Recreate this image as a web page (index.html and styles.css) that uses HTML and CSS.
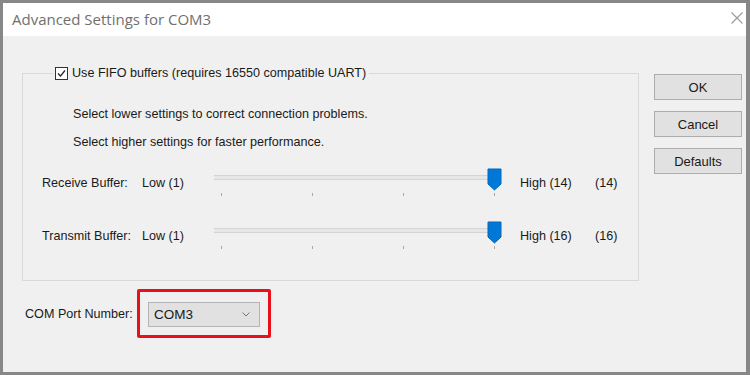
FILE: index.html
```html
<!DOCTYPE html>
<html lang="en">
<head>
  <meta charset="UTF-8" />
  <title>Advanced Settings for COM3</title>
  <link rel="stylesheet" href="styles.css">
</head>
<body>
  <div class="window">
    <div class="titlebar">
      <span class="title">Advanced Settings for COM3</span>
      <svg class="close" width="12" height="12" viewBox="0 0 12 12">
        <path d="M0.5 0.5 L11.5 11.5 M11.5 0.5 L0.5 11.5" stroke="#9a9a9a" stroke-width="1.1" fill="none" />
      </svg>
    </div>

    <div class="content">
      <div class="main">
        <fieldset class="group">
          <legend>
            <span class="checkbox">
              <svg width="11" height="11" viewBox="0 0 11 11">
                <path d="M2 5.5 L4.5 8 L9 2.5" stroke="#222" stroke-width="1.2" fill="none" />
              </svg>
            </span>
            Use FIFO buffers (requires 16550 compatible UART)
          </legend>

          <p class="hint first">Select lower settings to correct connection problems.</p>
          <p class="hint">Select higher settings for faster performance.</p>

          <div class="slider-row">
            <span class="row-label">Receive Buffer:</span>
            <span class="low">Low (1)</span>
            <div class="slider">
              <div class="track"></div>
              <div class="ticks"><i></i><i></i><i></i><i></i></div>
              <svg class="thumb" width="15" height="23" viewBox="0 0 15 23">
                <path d="M1 1 H14 V16 L7.5 22 L1 16 Z" fill="#0078d7" stroke="#0068bd" stroke-width="1" />
              </svg>
            </div>
            <span class="high">High (14)</span>
            <span class="value">(14)</span>
          </div>

          <div class="slider-row second">
            <span class="row-label">Transmit Buffer:</span>
            <span class="low">Low (1)</span>
            <div class="slider">
              <div class="track"></div>
              <div class="ticks"><i></i><i></i><i></i><i></i></div>
              <svg class="thumb" width="15" height="23" viewBox="0 0 15 23">
                <path d="M1 1 H14 V16 L7.5 22 L1 16 Z" fill="#0078d7" stroke="#0068bd" stroke-width="1" />
              </svg>
            </div>
            <span class="high">High (16)</span>
            <span class="value">(16)</span>
          </div>
        </fieldset>

        <div class="port-row">
          <span class="port-label">COM Port Number:</span>
          <div class="highlight">
            <div class="select">
              <span>COM3</span>
              <svg width="8" height="5" viewBox="0 0 8 5">
                <path d="M0.5 0.5 L4 4 L7.5 0.5" stroke="#777" stroke-width="1" fill="none" />
              </svg>
            </div>
          </div>
        </div>
      </div>

      <div class="buttons">
        <button class="btn">OK</button>
        <button class="btn">Cancel</button>
        <button class="btn">Defaults</button>
      </div>
    </div>
  </div>
</body>
</html>
```

FILE: styles.css
```css
body {
  margin: 0;
  font-family: 'Liberation Sans', Arial, sans-serif;
  font-size: 12.6px;
  color: #1a1a1a;
}
.window {
  width: 750px;
  height: 375px;
  box-sizing: border-box;
  border: 3px solid #878787;
  border-right-width: 4px;
  background-color: #f0f0f0;
  display: flex;
  flex-direction: column;
}
.titlebar {
  height: 33px;
  background-color: #fff;
  display: flex;
  align-items: center;
  justify-content: space-between;
  padding: 0 3px 0 9px;
  flex-shrink: 0;
}
.title {
  font-family: 'Open Sans', 'Noto Sans', sans-serif;
  font-size: 15px;
  color: #707070;
  margin-top: -2px;
}
.close {
  margin-top: -4px;
}
.content {
  display: flex;
  padding: 28px 4px 0 19px;
  gap: 15px;
}
.main {
  width: 617px;
}
.group {
  margin: 0;
  padding: 0 0 28px 19px;
  border: 1px solid #d9d9d9;
  height: 217px;
  box-sizing: border-box;
}
.group legend {
  margin-left: 11px;
  padding: 0 3px 0 2px;
  height: 18px;
  line-height: 18px;
  display: flex;
  align-items: center;
}
.checkbox {
  width: 11px;
  height: 11px;
  border: 1px solid #333;
  background-color: #fff;
  display: inline-flex;
  margin-right: 4px;
}
.hint {
  margin: 0 0 12px 31px;
  line-height: 16px;
}
.hint.first {
  margin-top: 24px;
}
.slider-row {
  display: flex;
  align-items: center;
  height: 30px;
  margin-top: 18px;
}
.slider-row.second {
  margin-top: 23px;
}
.row-label {
  width: 100px;
}
.low {
  width: 72px;
}
.slider {
  position: relative;
  width: 286px;
  height: 30px;
}
.track {
  margin-top: 7px;
  width: 284px;
  height: 3px;
  background-color: #e7e7e7;
  border: 1px solid #d4d4d4;
  border-left: none;
}
.ticks {
  display: flex;
  justify-content: space-between;
  margin: 13px 5px 0 7px;
}
.ticks i {
  width: 1px;
  height: 3px;
  background-color: #a8a8a8;
}
.thumb {
  position: absolute;
  top: 0;
  left: 273px;
}
.high {
  margin-left: 20px;
  width: 75px;
}
.port-row {
  display: flex;
  align-items: center;
  margin-top: 8px;
  margin-left: 3px;
}
.port-label {
  width: 112px;
}
.highlight {
  border: 3px solid #e8111b;
  border-radius: 2px;
  padding: 10px 8px 8px 8px;
}
.select {
  width: 112px;
  height: 25px;
  box-sizing: border-box;
  background-color: #e1e1e1;
  border: 1px solid #b4b4b4;
  display: flex;
  align-items: center;
  justify-content: space-between;
  padding: 0 9px 0 5px;
  font-size: 13.5px;
}
.buttons {
  display: flex;
  flex-direction: column;
  gap: 11px;
  margin-top: 10px;
}
.btn {
  width: 88px;
  height: 26px;
  background-color: #e1e1e1;
  border: 1px solid #adadad;
  font-family: 'Liberation Sans', Arial, sans-serif;
  font-size: 13px;
  color: #1a1a1a;
  padding: 0;
}
```
